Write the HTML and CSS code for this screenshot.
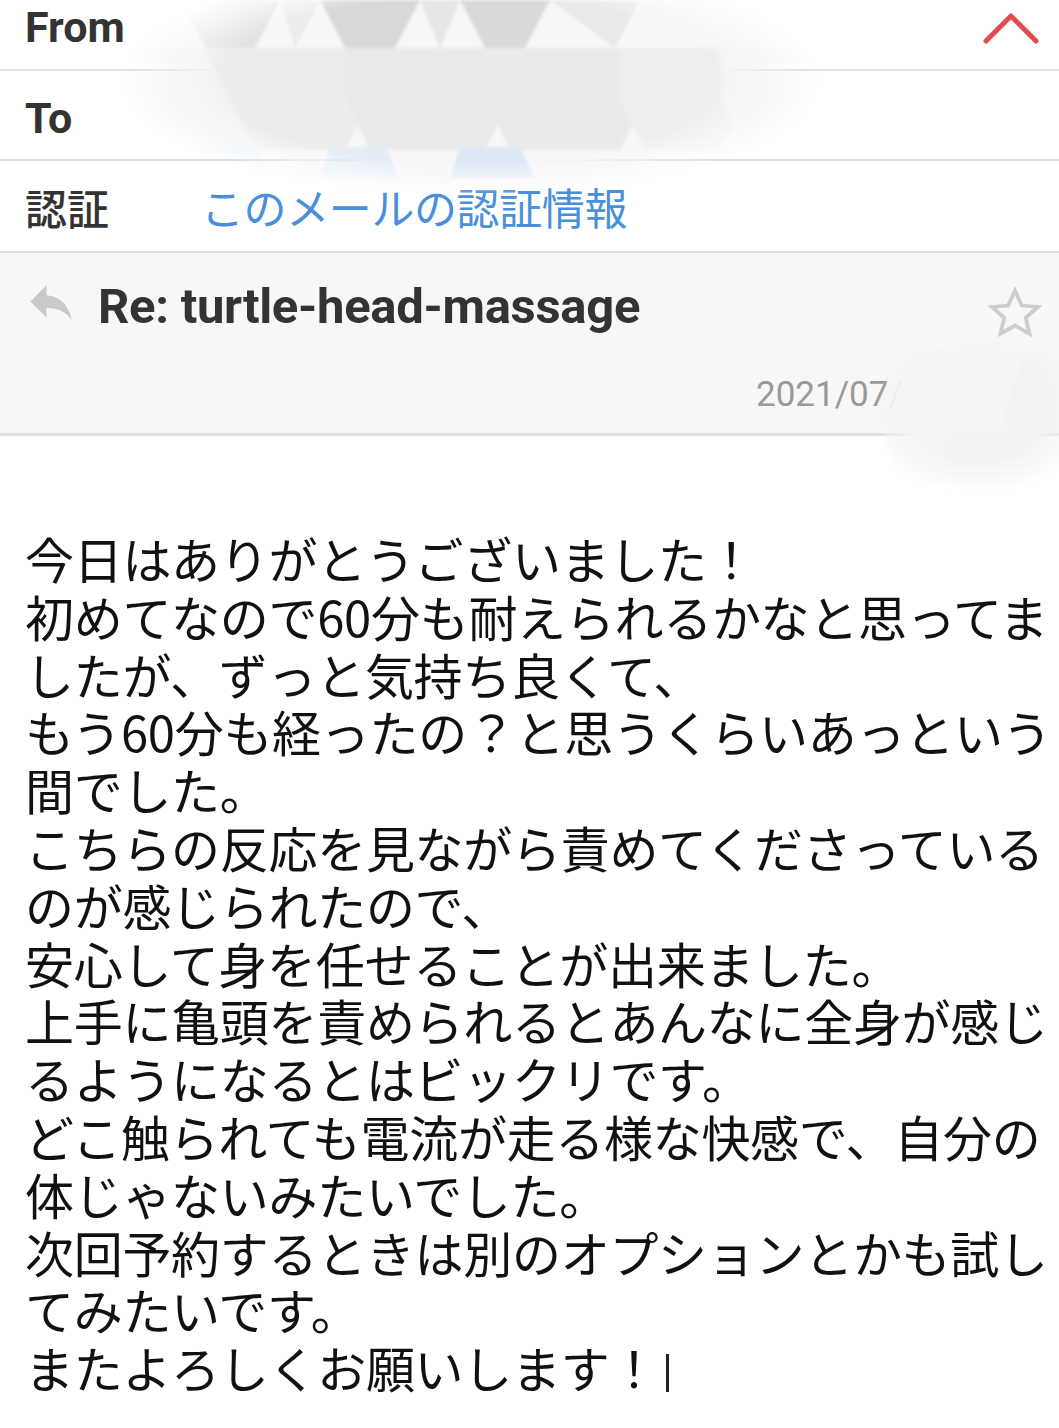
FILE: index.html
```html
<!DOCTYPE html>
<html lang="ja">
<head>
<meta charset="utf-8">
<title>Mail</title>
<link rel="stylesheet" href="styles.css">
</head>
<body>
<div class="page">
  <header class="meta">
    <div class="row row-from">
      <span class="label">From</span>
      <svg class="chevron" width="56" height="34" viewBox="0 0 56 34"><polyline points="3,29 28,4 53,29" fill="none" stroke="#e24b50" stroke-width="5" stroke-linecap="round" stroke-linejoin="round"/></svg>
    </div>
    <div class="row row-to">
      <span class="label">To</span>
    </div>
    <div class="row row-auth">
      <span class="label jp">認証</span>
      <span class="link">このメールの認証情報</span>
    </div>
    <div class="subject">
      <div class="subject-top">
        <svg class="reply" width="54" height="54" viewBox="0 0 24 24"><path d="M10 9V4.6l-7.2 7.2 7.2 7.2v-4.3c5 0 8.6 1.6 11.2 5.3-1-5.2-4-10.3-11.2-11z" fill="#c9c9c9"/></svg>
        <h1 class="title">Re: turtle-head-massage</h1>
        <svg class="star" width="60" height="60" viewBox="0 0 24 24"><path d="M12 2.6l2.7 6 6.5.6-4.9 4.3 1.5 6.4L12 16.6 6.2 19.9l1.5-6.4L2.8 9.2l6.5-.6z" fill="none" stroke="#cdcdcd" stroke-width="1.5" stroke-linejoin="miter"/></svg>
      </div>
      <div class="date">2021/07<span class="faint">/</span></div>
    </div>
    <svg class="mosaic mosaic-top" width="700" height="210" viewBox="0 0 700 210">
      <defs>
        <filter id="b1"><feGaussianBlur stdDeviation="1.5"/></filter>
        <radialGradient id="fade" cx="50%" cy="50%" r="50%">
          <stop offset="0.72" stop-color="#fff" stop-opacity="1"/>
          <stop offset="1" stop-color="#fff" stop-opacity="0"/>
        </radialGradient>
        <mask id="m1"><ellipse cx="350" cy="80" rx="350" ry="115" fill="url(#fade)"/></mask>
      </defs>
      <g mask="url(#m1)" filter="url(#b1)">
        <rect x="0" y="0" width="700" height="210" fill="#f6f6f6"/>
        <polygon points="60,0 160,0 135,48 85,48" fill="#e3e3e3"/>
        <polygon points="160,0 200,0 175,48" fill="#ececec"/>
        <polygon points="200,0 300,0 275,48 225,48" fill="#d9d9d9"/>
        <polygon points="300,0 340,0 320,48" fill="#e6e6e6"/>
        <polygon points="340,0 430,0 405,48 365,48" fill="#dadada"/>
        <polygon points="430,0 520,0 495,48" fill="#e9e9e9"/>
        <polygon points="0,48 85,48 135,48 160,100 135,150 40,150" fill="#f2f2f2"/>
        <polygon points="85,48 225,48 250,100 225,150 135,150 110,100" fill="#ececec"/>
        <polygon points="225,48 365,48 390,100 365,150 250,150 225,100" fill="#e9e9e9"/>
        <polygon points="365,48 500,48 525,100 500,150 390,150 365,100" fill="#eaeaea"/>
        <polygon points="500,48 600,48 625,100 600,150 525,150 500,100" fill="#eeeeee"/>
        <polygon points="600,48 680,48 700,100 680,150 625,150 600,100" fill="#f3f3f3"/>
        <polygon points="80,147 135,147 150,178 72,178" fill="#e3ecf7"/>
        <polygon points="210,147 265,147 280,178 200,178" fill="#e3ecf7"/>
        <polygon points="340,147 400,147 415,178 330,178" fill="#dde8f6"/>
      </g>
    </svg>
    <svg class="mosaic mosaic-date" width="210" height="160" viewBox="0 0 210 160">
      <defs>
        <filter id="b2"><feGaussianBlur stdDeviation="2"/></filter>
        <radialGradient id="fade2" cx="55%" cy="45%" r="55%">
          <stop offset="0.6" stop-color="#fff" stop-opacity="1"/>
          <stop offset="1" stop-color="#fff" stop-opacity="0"/>
        </radialGradient>
        <mask id="m2"><rect x="0" y="0" width="210" height="160" fill="url(#fade2)"/></mask>
      </defs>
      <g mask="url(#m2)" filter="url(#b2)">
        <polygon points="40,15 100,15 125,80 100,150 40,150 15,80" fill="#f3f3f3"/>
        <polygon points="100,0 165,0 190,50 165,100 100,100 80,50" fill="#f4f4f4"/>
        <polygon points="100,95 160,95 185,125 160,155 105,155 85,125" fill="#f2f2f2"/>
        <polygon points="165,15 215,15 215,150 165,150 145,80" fill="#f1f1f1"/>
      </g>
    </svg>
  </header>
  <main class="body">
    <p class="message">今日はありがとうございました！<br>初めてなので60分も耐えられるかなと思ってま<br>したが、ずっと気持ち良くて、<br>もう60分も経ったの？と思うくらいあっという<br>間でした。<br>こちらの反応を見ながら責めてくださっている<br>のが感じられたので、<br>安心して身を任せることが出来ました。<br>上手に亀頭を責められるとあんなに全身が感じ<br>るようになるとはビックリです。<br>どこ触られても電流が走る様な快感で、自分の<br>体じゃないみたいでした。<br>次回予約するときは別のオプションとかも試し<br>てみたいです。<br>またよろしくお願いします！<span class="cursor"></span></p>
  </main>
</div>
</body>
</html>
```

FILE: styles.css
```css
html, body {
  margin: 0;
  padding: 0;
  background: #ffffff;
}

.page {
  width: 1059px;
  min-height: 1428px;
  overflow: hidden;
  font-family: Roboto, "Noto Sans CJK JP", sans-serif;
}

.meta {
  position: relative;
}

.row {
  display: flex;
  align-items: center;
  padding-left: 25px;
  border-bottom: 2px solid #dde0e4;
  box-sizing: border-box;
}

.row-from {
  height: 71px;
  justify-content: space-between;
  padding-right: 20px;
  padding-bottom: 16px;
}

.row-to {
  height: 90px;
  padding-top: 6px;
}

.row-auth {
  height: 92px;
}

.label {
  font-family: Roboto, "Noto Sans CJK JP", sans-serif;
  font-weight: 700;
  font-size: 43px;
  color: #333333;
  width: 176px;
  flex: none;
}

.label.jp {
  font-family: "Noto Sans CJK JP", sans-serif;
  font-weight: 500;
  font-size: 42px;
}

.link {
  font-family: "Noto Sans CJK JP", sans-serif;
  font-size: 43px;
  color: #4a8fdc;
  font-weight: 400;
  letter-spacing: -0.4px;
}

.chevron {
  display: block;
  margin-top: 4px;
}

.subject {
  background: #f7f7f7;
  height: 183px;
  border-bottom: 3px solid #dcdee1;
  box-sizing: border-box;
  padding-top: 15px;
}

.subject-top {
  display: flex;
  align-items: center;
  padding-left: 24px;
  padding-right: 14px;
}

.reply {
  display: block;
  flex: none;
  margin-top: -8px;
}

.title {
  margin: 0 0 0 20px;
  font-family: Roboto, sans-serif;
  font-weight: 700;
  font-size: 49px;
  color: #333333;
  flex: 1;
  letter-spacing: -0.3px;
}

.star {
  display: block;
  flex: none;
  margin-top: 16px;
}

.date {
  margin-top: 30px;
  padding-left: 756px;
  font-family: Roboto, sans-serif;
  font-size: 35px;
  color: #999999;
}

.date .faint {
  color: #dddddd;
}

.mosaic {
  position: absolute;
  pointer-events: none;
}

.mosaic-top {
  top: 0;
  left: 120px;
}

.mosaic-date {
  top: 335px;
  left: 860px;
}

.body {
  padding: 93px 0 0 25px;
}

.message {
  margin: 0;
  font-family: "Noto Sans CJK JP", sans-serif;
  font-weight: 400;
  font-size: 49px;
  line-height: 57.8px;
  color: #111111;
  white-space: nowrap;
  letter-spacing: -0.3px;
}

.cursor {
  display: inline-block;
  width: 3px;
  height: 38px;
  background: #222222;
  margin-left: 8px;
  vertical-align: -4px;
}
```
